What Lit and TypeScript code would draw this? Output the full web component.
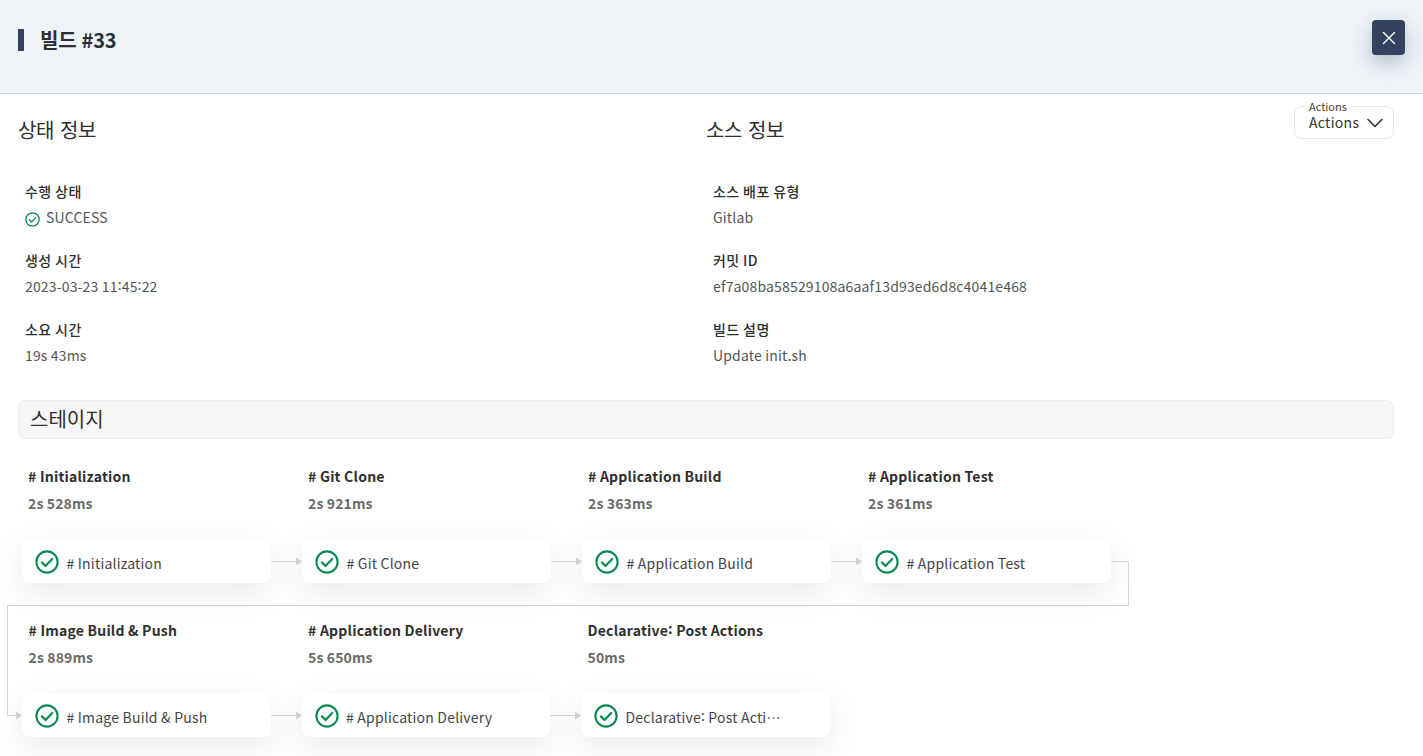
import { LitElement, html, css, svg } from "lit";
import { customElement } from "lit/decorators.js";

const checkIcon = html`<svg class="check" viewBox="0 0 24 24" fill="none" stroke="#0b8a53" aria-hidden="true">
  <circle cx="12" cy="12" r="10.6" stroke-width="2.1"></circle>
  <path d="M6.9 12.4l3.6 3.6 6.7-7" stroke-width="2.2" stroke-linecap="round" stroke-linejoin="round"></path>
</svg>`;

const rows = [
  [
    ["# Initialization", "2s 528ms"],
    ["# Git Clone", "2s 921ms"],
    ["# Application Build", "2s 363ms"],
    ["# Application Test", "2s 361ms"],
  ],
  [
    ["# Image Build & Push", "2s 889ms"],
    ["# Application Delivery", "5s 650ms"],
    ["Declarative: Post Actions", "50ms"],
  ],
];

const withColons = (text: string) => {
  const parts = text.split(":");
  return parts.map((p, i) => (i === 0 ? p : html`<span class="colon">:</span>${p}`));
};

@customElement("app-root")
export class AppRoot extends LitElement {
  static styles = css`
    :host {
      display: block;
      width: 100%;
      height: 756px;
      overflow: hidden;
      background: #fff;
      font-family: "Noto Sans CJK KR", "Noto Sans", sans-serif;
      color: #2f2f2f;
      font-size: 14px;
    }
    * { box-sizing: border-box; }
    .colon { vertical-align: 2px; line-height: 0; }
    .header {
      height: 94px;
      background: #eef3f8;
      border-bottom: 1px solid #cfd5de;
      padding: 29px 18px 0;
      position: relative;
    }
    .title {
      margin: 0;
      height: 22px;
      border-left: 6px solid #33435f;
      padding-left: 16px;
      font-size: 20px;
      line-height: 22px;
      font-weight: 700;
      color: #2b2f36;
      word-spacing: 1px;
      letter-spacing: -0.25px;
    }
    .close {
      position: absolute;
      top: 20px;
      left: 1372px;
      width: 33px;
      height: 35px;
      border-radius: 4px;
      border: 0;
      padding: 0;
      background: #33435f;
      box-shadow: 0 8px 20px rgba(51, 67, 95, 0.3);
      display: flex;
      align-items: center;
      justify-content: center;
    }
    .close svg { width: 14px; height: 14px; }
    .info {
      display: flex;
      padding: 21px 18px 0;
      position: relative;
      height: 306px;
    }
    .info-col { width: 688px; }
    .info-col h2 {
      margin: 0 0 33px;
      font-size: 20px;
      line-height: 30px;
      height: 32px;
      font-weight: 400;
      color: #2f2f2f;
      word-spacing: 1.6px;
      letter-spacing: -0.3px;
    }
    .field { padding-left: 7px; height: 69px; }
    .label {
      font-size: 14px;
      line-height: 20px;
      font-weight: 500;
      color: #2f2f2f;
      padding-top: 1px;
      height: 25px;
      letter-spacing: 0.4px;
    }
    .value {
      font-size: 14px;
      line-height: 24px;
      color: #555;
      letter-spacing: 0.16px;
      display: flex;
      align-items: center;
      gap: 6px;
    }
    .value .check { width: 15px; height: 15px; margin-top: 4px; }
    .actions {
      position: absolute;
      top: 12px;
      left: 1294px;
      width: 100px;
      height: 33px;
      border: 1px solid #e6e8eb;
      border-radius: 7px;
      display: flex;
      align-items: center;
      padding: 0 0 2px 14px;
      gap: 8px;
      font-size: 14px;
      letter-spacing: 0.3px;
      color: #333;
    }
    .actions .legend {
      position: absolute;
      top: -7px;
      left: 9px;
      padding: 0 5px;
      background: #fff;
      font-size: 11px;
      line-height: 13px;
      letter-spacing: 0;
      color: #444;
    }
    .actions svg { width: 16px; height: 10px; margin-top: 2px; }
    .stage-head {
      margin: 0 29px 0 18px;
      height: 39px;
      border: 1px solid #eeeeee;
      border-radius: 7px;
      background: #f7f7f7;
      padding-left: 11px;
      font-size: 20px;
      line-height: 36px;
      font-weight: 400;
      color: #2f2f2f;
    }
    .pipeline {
      position: relative;
      padding: 23px 0 0 22px;
    }
    .row { display: flex; height: 154px; }
    .stage { width: 280px; flex: none; }
    .row.tight .stage { width: 279.5px; }
    .stage-title {
      padding-left: 6px;
      font-size: 14px;
      line-height: 28px;
      font-weight: 700;
      letter-spacing: 0.22px;
      color: #2f2f2f;
    }
    .row.tight .stage-title, .row.tight .stage-time { padding-left: 6.5px; }
    .stage-time {
      padding-left: 6px;
      font-size: 14px;
      line-height: 26px;
      font-weight: 700;
      letter-spacing: 0.14px;
      color: #6a6a6a;
      height: 49px;
    }
    .node { display: flex; align-items: center; }
    .card {
      flex: 1;
      min-width: 0;
      height: 44px;
      background: #fff;
      border-radius: 8px;
      box-shadow: 0 10px 30px rgba(60, 70, 90, 0.1);
      display: flex;
      align-items: center;
      gap: 7.5px;
      padding: 0 13px;
      font-size: 14px;
      letter-spacing: 0.2px;
      color: #444;
      position: relative;
      z-index: 1;
    }
    .card .text {
      display: block;
      max-width: 156px;
      margin-top: 4px;
      overflow: hidden;
      white-space: nowrap;
      text-overflow: ellipsis;
      min-width: 0;
    }
    .card .check { width: 24px; height: 24px; flex: none; margin-top: 1px; }
    .arrow { flex: none; width: 31px; height: 44px; }
    .wrap-line {
      position: absolute;
      left: 0;
      top: 0;
      width: 1423px;
      height: 756px;
      pointer-events: none;
    }
    .scene { position: relative; height: 756px; }
  `;

  private stage([name, time]: string[], hasArrow: boolean) {
    return html`<div class="stage">
      <div class="stage-title">${withColons(name)}</div>
      <div class="stage-time">${time}</div>
      <div class="node">
        <div class="card">${checkIcon}<span class="text">${withColons(name)}</span></div>
        <svg class="arrow" viewBox="0 0 31 44">
          <path d="M0 22.5H25" stroke="#d6d6d6" fill="none" visibility=${hasArrow ? "visible" : "hidden"}></path>
          <path d="M25 18.5l6 4-6 4z" fill="#d6d6d6" visibility=${hasArrow ? "visible" : "hidden"}></path>
        </svg>
      </div>
    </div>`;
  }

  render() {
    return html`
      <div class="scene">
        <div class="header">
          <h1 class="title">빌드 #33</h1>
          <button class="close" aria-label="닫기">
            <svg viewBox="0 0 14 14" fill="none" stroke="#fff" stroke-width="1.4" stroke-linecap="round">
              <path d="M1.5 1.5l11 11M12.5 1.5l-11 11"></path>
            </svg>
          </button>
        </div>
        <div class="info">
          <div class="info-col">
            <h2>상태 정보</h2>
            <div class="field">
              <div class="label">수행 상태</div>
              <div class="value">${checkIcon}SUCCESS</div>
            </div>
            <div class="field">
              <div class="label">생성 시간</div>
              <div class="value"><span>${withColons("2023-03-23 11:45:22")}</span></div>
            </div>
            <div class="field">
              <div class="label">소요 시간</div>
              <div class="value">19s 43ms</div>
            </div>
          </div>
          <div class="info-col">
            <h2>소스 정보</h2>
            <div class="field">
              <div class="label">소스 배포 유형</div>
              <div class="value">Gitlab</div>
            </div>
            <div class="field">
              <div class="label">커밋 ID</div>
              <div class="value">ef7a08ba58529108a6aaf13d93ed6d8c4041e468</div>
            </div>
            <div class="field">
              <div class="label">빌드 설명</div>
              <div class="value">Update init.sh</div>
            </div>
          </div>
          <div class="actions">
            <span class="legend">Actions</span>
            Actions
            <svg viewBox="0 0 16 10" fill="none" stroke="#333" stroke-width="1.6" stroke-linecap="round" stroke-linejoin="round">
              <path d="M1 1.5l7 7 7-7"></path>
            </svg>
          </div>
        </div>
        <h2 class="stage-head">스테이지</h2>
        <div class="pipeline">
          <div class="row">
            ${rows[0].map((s, i) => this.stage(s, i < rows[0].length - 1))}
          </div>
          <div class="row tight">
            ${rows[1].map((s, i) => this.stage(s, i < rows[1].length - 1))}
          </div>
        </div>
        <svg class="wrap-line" viewBox="0 0 1423 756" fill="none">
          ${svg`<path d="M1111 561.5H1128.5V605.5H7.5V715.5H16" stroke="#d6d6d6"></path>
          <path d="M16 711.5l6 4-6 4z" fill="#d6d6d6"></path>`}
        </svg>
      </div>
    `;
  }
}
